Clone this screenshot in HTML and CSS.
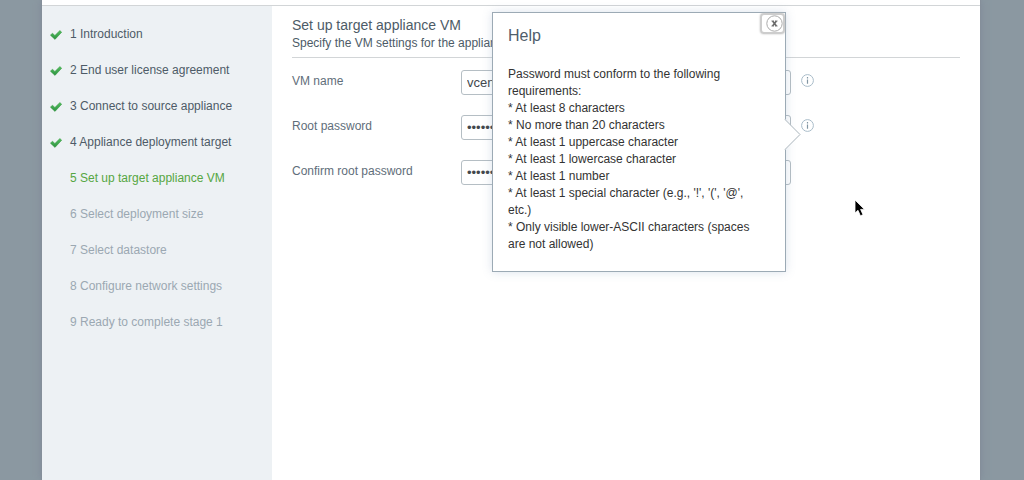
FILE: index.html
```html
<!DOCTYPE html>
<html lang="en">
<head>
<meta charset="utf-8">
<title>Set up target appliance VM</title>
<link rel="stylesheet" href="styles.css">
</head>
<body>
<svg class="defs" width="0" height="0" aria-hidden="true">
  <defs>
    <linearGradient id="tick" x1="0" y1="0" x2="0" y2="1"><stop offset="0" stop-color="#55bf60"/><stop offset="1" stop-color="#2c9240"/></linearGradient>
    <symbol id="check" viewBox="0 0 12 10"><path d="M0.4 5.2 2.4 3.2 4.9 5.4 9.9 0.5 11.7 2.2 5 9.4Z" fill="url(#tick)" stroke="#35963f" stroke-width=".5"/></symbol>
    <symbol id="info" viewBox="0 0 13 13"><circle cx="6.5" cy="6.5" r="5.9" fill="#fff" stroke="#a9bcc9"/><path d="M6.5 5.4V9.8M6.5 3.1V4.4" stroke="#8296a3" stroke-width="1.2"/></symbol>
  </defs>
</svg>
<div class="wizard">
  <div class="topbar"></div>
  <div class="body">
    <nav class="sidebar" aria-label="Steps">
      <ol class="steps">
        <li class="step"><svg class="check"><use href="#check"/></svg><span>1 Introduction</span></li>
        <li class="step"><svg class="check"><use href="#check"/></svg><span>2 End user license agreement</span></li>
        <li class="step"><svg class="check"><use href="#check"/></svg><span>3 Connect to source appliance</span></li>
        <li class="step"><svg class="check"><use href="#check"/></svg><span>4 Appliance deployment target</span></li>
        <li class="step current" aria-current="step"><span>5 Set up target appliance VM</span></li>
        <li class="step pending"><span>6 Select deployment size</span></li>
        <li class="step pending"><span>7 Select datastore</span></li>
        <li class="step pending"><span>8 Configure network settings</span></li>
        <li class="step pending"><span>9 Ready to complete stage 1</span></li>
      </ol>
    </nav>
    <main class="content">
      <header class="heading">
        <h1>Set up target appliance VM</h1>
        <p>Specify the VM settings for the appliance.</p>
      </header>
      <form class="form">
        <div class="row">
          <label for="name">VM name</label>
          <div class="field"><input id="name" type="text" value="vcenter"></div>
          <button class="info" type="button" aria-label="About VM name"><svg><use href="#info"/></svg></button>
        </div>
        <div class="row">
          <label for="password">Root password</label>
          <div class="field">
            <input id="password" type="password" value="password">
            <section class="help" role="dialog" aria-labelledby="help-title">
              <button class="close" type="button" aria-label="Close">
                <svg viewBox="0 0 17 17"><circle cx="8.5" cy="8.5" r="7.7" fill="#fff" stroke="#aaa"/><path d="M6.6 6 10.4 11M10.4 6 6.6 11" stroke="#6b6b6b" stroke-width="1.7"/><path d="M5.4 6H7.8M9.2 6H11.6M5.4 11H7.8M9.2 11H11.6" stroke="#6b6b6b" stroke-width=".8"/></svg>
              </button>
              <h2 id="help-title">Help</h2>
              <p>Password must conform to the following requirements:<br>* At least 8 characters<br>* No more than 20 characters<br>* At least 1 uppercase character<br>* At least 1 lowercase character<br>* At least 1 number<br>* At least 1 special character (e.g., '!', '(', '@', etc.)<br>* Only visible lower-ASCII characters (spaces are not allowed)</p>
              <svg class="arrow" viewBox="0 0 17 32"><path d="M0 0H1L16 16 1 31H0Z" fill="#fff"/><path d="M1 .5 16 15.5 1 30.5" fill="none" stroke="#a9b4bb"/></svg>
            </section>
          </div>
          <button class="info" type="button" aria-label="About root password"><svg><use href="#info"/></svg></button>
        </div>
        <div class="row">
          <label for="confirm">Confirm root password</label>
          <div class="field"><input id="confirm" type="password" value="password"></div>
        </div>
      </form>
    </main>
  </div>
</div>
<svg class="cursor" viewBox="0 0 12 18" aria-hidden="true"><path d="M1 1V14L4 11.3 6.4 16.8 9 15.7 6.6 10.4H10.5Z" fill="#000" stroke="#fff" stroke-width=".8"/></svg>
</body>
</html>
```
FILE: styles.css
```css
* { box-sizing: border-box; }

body {
  margin: 0;
  min-height: 100vh;
  display: flex;
  padding: 0 44px 0 42px;
  background: #8b98a1;
  color: #4d5b67;
  font: 12px/16px "Liberation Sans", Arial, sans-serif;
}

h1, h2, p, ol { margin: 0; padding: 0; font-weight: normal; }

.defs { position: absolute; }

.wizard {
  flex: 1;
  display: flex;
  flex-direction: column;
  background: #fff;
  box-shadow: 0 0 0 1px #858f9a, 0 0 8px #7d8797;
}

.topbar { height: 6px; border-bottom: 1px solid #d2d5d7; }

.body { flex: 1; display: flex; }

.sidebar { width: 230px; padding-top: 10px; background: #edf1f4; }

.steps { list-style: none; }

.step {
  height: 36px;
  padding-left: 8px;
  display: grid;
  grid-template-columns: 12px 1fr;
  column-gap: 8px;
  align-items: center;
}

.step span { grid-column: 2; }
.check { width: 12px; height: 10px; margin-top: 2px; }
.current { color: #56a642; }
.pending { color: #9ba8b2; }

.content { flex: 1; padding: 10px 20px 0; }

.heading { padding-bottom: 6px; border-bottom: 1px solid #d2d5d7; }
.heading h1 { font-size: 14px; line-height: 19px; }

.form { display: grid; row-gap: 20px; padding-top: 12px; }

.row { display: flex; height: 25px; }

.row label { width: 169px; padding-top: 3px; color: #5f6e7a; }

.field { position: relative; width: 330px; }

.field input {
  display: block;
  width: 100%;
  height: 25px;
  padding: 0 5px;
  border: 1px solid #b5bec4;
  border-radius: 3px;
  background: #fff;
  color: #43484d;
  font: 13px "Liberation Sans", Arial, sans-serif;
}

.info, .close {
  padding: 0;
  border: 0;
  background: none;
}

.info { width: 13px; height: 13px; margin: 4px 0 0 10px; }
.info svg { display: block; width: 13px; height: 13px; }

.help {
  position: absolute;
  z-index: 1;
  left: 31px;
  top: -103px;
  width: 294px;
  padding: 13px 30px 18px 15px;
  border: 1px solid #9caab5;
  background: #fff;
  box-shadow: 0 0 9px rgba(110, 140, 180, 0.25);
  color: #333;
  line-height: 17px;
}

.help h2 {
  margin-bottom: 20px;
  color: #4f5e6b;
  font-size: 16px;
  line-height: 20px;
}

.close {
  position: absolute;
  top: 0;
  right: 0;
  width: 25px;
  height: 21px;
  display: flex;
  align-items: center;
  justify-content: flex-end;
  border: 2px solid #cdcdcd;
  border-radius: 4px;
  box-shadow: 0 0 2px #bbb;
}

.close svg { width: 17px; height: 17px; }

.arrow { position: absolute; left: 291px; top: 106px; width: 17px; height: 32px; }

.cursor { position: absolute; left: 854px; top: 199px; width: 12px; height: 18px; }
```
